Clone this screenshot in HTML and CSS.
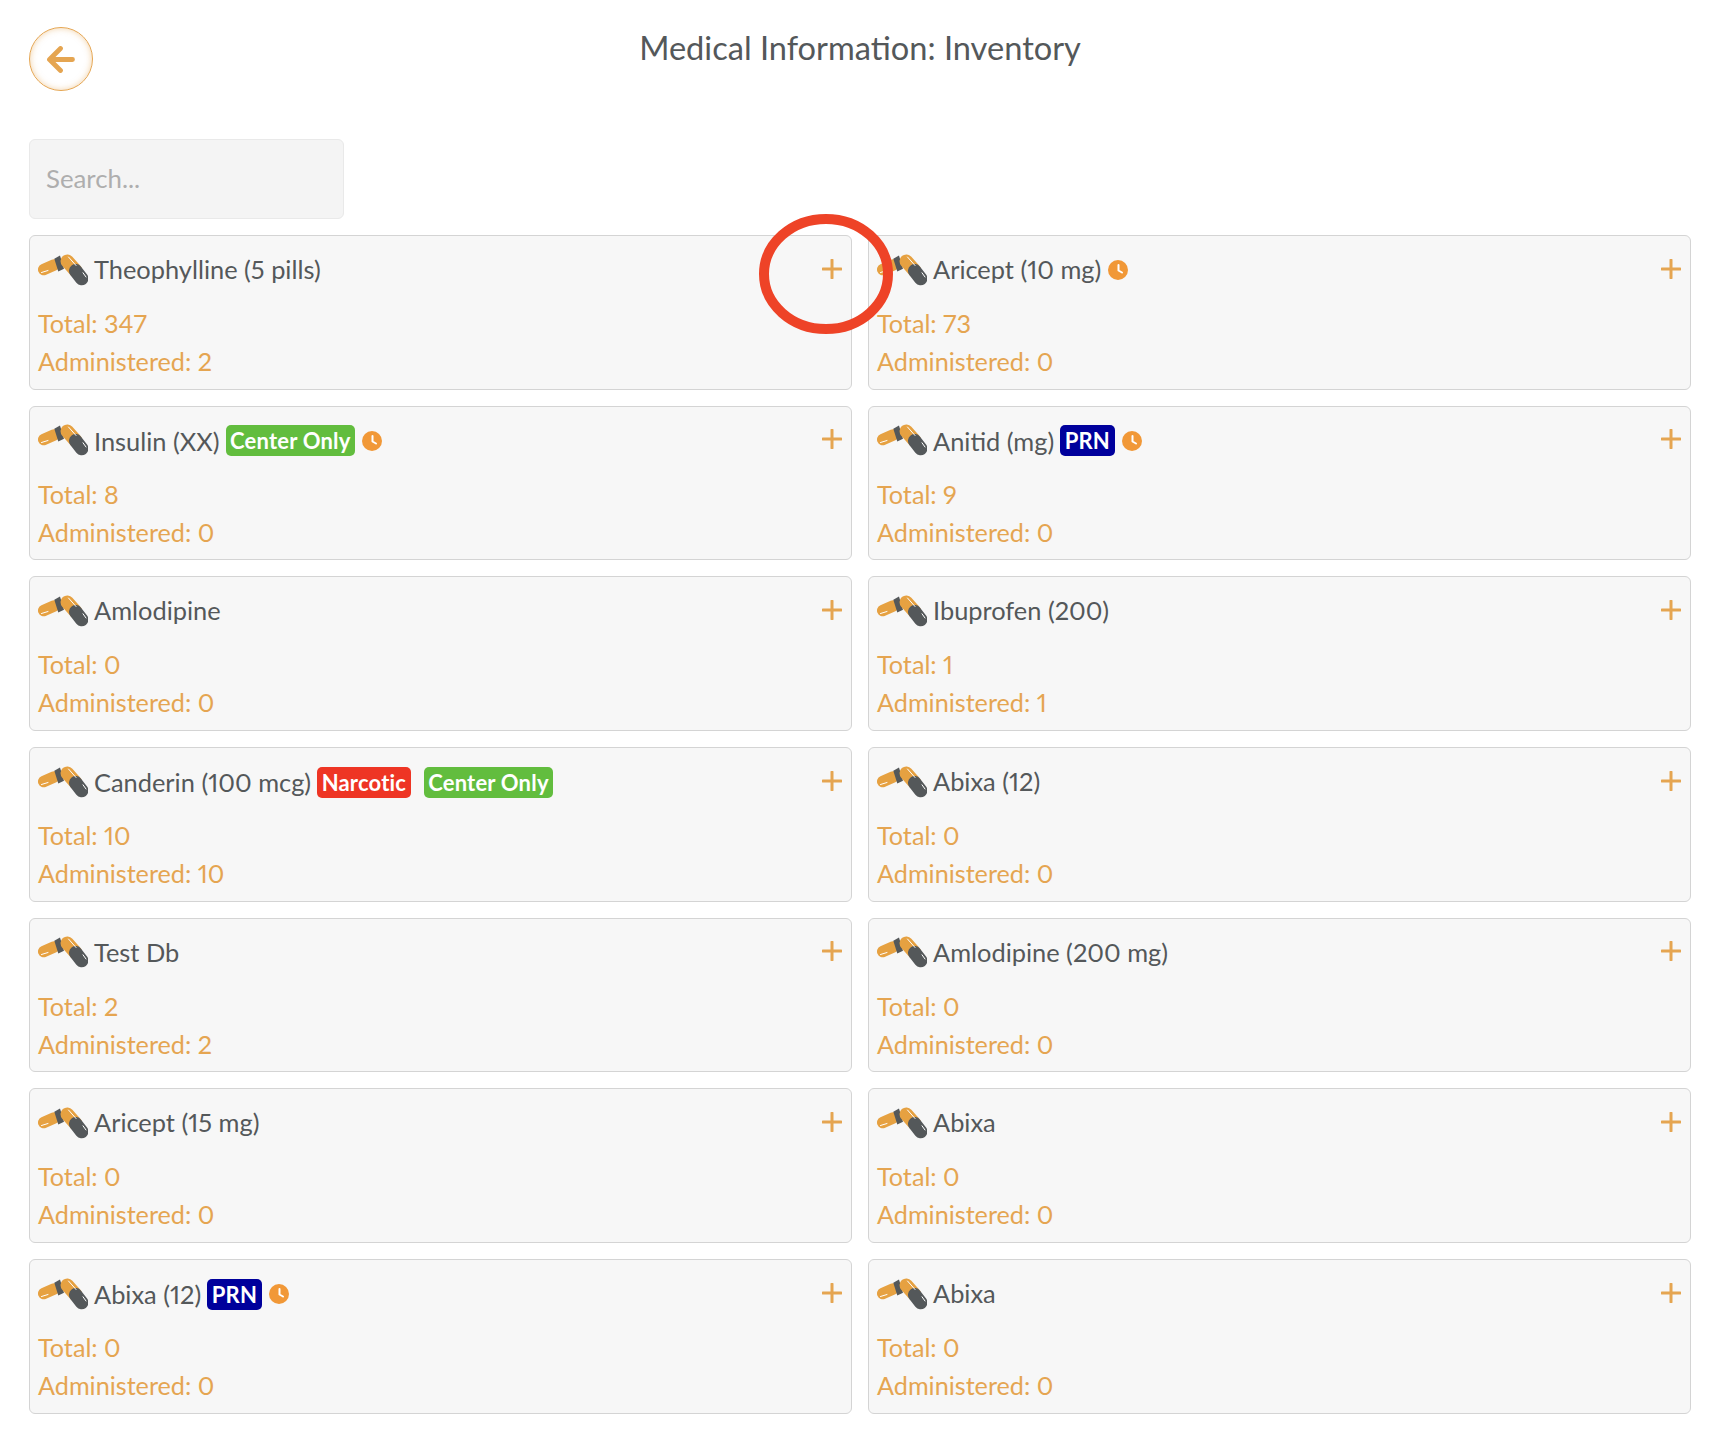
FILE: index.html
```html
<!DOCTYPE html>
<html lang="en">
<head>
<meta charset="utf-8">
<title>Medical Information: Inventory</title>
<link rel="stylesheet" href="styles.css">
</head>
<body>
<svg width="0" height="0" class="defs">
  <symbol id="pill" viewBox="0 0 50 32">
    <path d="M5.800 15.500 16 11" stroke="#e6a141" stroke-width="11.700" stroke-linecap="round" fill="none"/>
    <path d="M3.500 18.500 10 16.500" stroke="#fff" stroke-width="1" fill="none" stroke-linecap="round"/>
    <path d="M16.300 4.800 22 1.500 26 14.800 20.300 17.500Z" fill="#54585a"/>
    <path d="M29.300 7.200 37.700 16.800" stroke="#e6a141" stroke-width="13.500" stroke-linecap="round" fill="none"/>
    <path d="M37.700 16.800 43.700 24.600" stroke="#54585a" stroke-width="13.500" stroke-linecap="round" fill="none"/>
    <path d="M30.500 3 38 11.500M45 18.800 48 23" stroke="#fff" stroke-width="1" fill="none" stroke-linecap="round"/>
  </symbol>
  <symbol id="plus" viewBox="0 0 20 20">
    <path d="M10 1V19M1 10H19" stroke="#e5a551" stroke-width="3" stroke-linecap="round" fill="none"/>
  </symbol>
  <symbol id="clock" viewBox="0 0 20 20">
    <circle cx="10" cy="10" r="10" fill="#f19837"/>
    <path d="M10.500 5V10.500L14 12.500" stroke="#fff" stroke-width="2" stroke-linecap="round" stroke-linejoin="round" fill="none"/>
  </symbol>
</svg>

<header class="header">
  <a class="back" href="#" aria-label="Back">
    <svg class="back-icon" viewBox="0 0 28 27"><path d="M13.500 2.500 2.500 13.500 13.500 24.500M3 13.500H25.500" stroke="#e5a551" stroke-width="4.800" stroke-linecap="round" stroke-linejoin="round" fill="none"/></svg>
  </a>
  <h1 class="title">Medical Information: Inventory</h1>
</header>

<input class="search" type="text" placeholder="Search...">

<main class="grid">
  <article class="card">
    <div class="row"><svg class="pill"><use href="#pill"/></svg><span class="name">Theophylline (5 pills)</span><button class="add"><svg class="plus"><use href="#plus"/></svg></button></div>
    <p class="stat">Total: 347</p><p class="stat">Administered: 2</p>
  </article>
  <article class="card">
    <div class="row"><svg class="pill"><use href="#pill"/></svg><span class="name">Aricept (10 mg)</span><svg class="clock"><use href="#clock"/></svg><button class="add"><svg class="plus"><use href="#plus"/></svg></button></div>
    <p class="stat">Total: 73</p><p class="stat">Administered: 0</p>
  </article>
  <article class="card">
    <div class="row"><svg class="pill"><use href="#pill"/></svg><span class="name">Insulin (XX)</span><span class="badge green">Center Only</span><svg class="clock"><use href="#clock"/></svg><button class="add"><svg class="plus"><use href="#plus"/></svg></button></div>
    <p class="stat">Total: 8</p><p class="stat">Administered: 0</p>
  </article>
  <article class="card">
    <div class="row"><svg class="pill"><use href="#pill"/></svg><span class="name">Anitid (mg)</span><span class="badge navy">PRN</span><svg class="clock"><use href="#clock"/></svg><button class="add"><svg class="plus"><use href="#plus"/></svg></button></div>
    <p class="stat">Total: 9</p><p class="stat">Administered: 0</p>
  </article>
  <article class="card">
    <div class="row"><svg class="pill"><use href="#pill"/></svg><span class="name">Amlodipine</span><button class="add"><svg class="plus"><use href="#plus"/></svg></button></div>
    <p class="stat">Total: 0</p><p class="stat">Administered: 0</p>
  </article>
  <article class="card">
    <div class="row"><svg class="pill"><use href="#pill"/></svg><span class="name">Ibuprofen (200)</span><button class="add"><svg class="plus"><use href="#plus"/></svg></button></div>
    <p class="stat">Total: 1</p><p class="stat">Administered: 1</p>
  </article>
  <article class="card">
    <div class="row"><svg class="pill"><use href="#pill"/></svg><span class="name">Canderin (100 mcg)</span><span class="badge red">Narcotic</span><span class="badge green spaced">Center Only</span><button class="add"><svg class="plus"><use href="#plus"/></svg></button></div>
    <p class="stat">Total: 10</p><p class="stat">Administered: 10</p>
  </article>
  <article class="card">
    <div class="row"><svg class="pill"><use href="#pill"/></svg><span class="name">Abixa (12)</span><button class="add"><svg class="plus"><use href="#plus"/></svg></button></div>
    <p class="stat">Total: 0</p><p class="stat">Administered: 0</p>
  </article>
  <article class="card">
    <div class="row"><svg class="pill"><use href="#pill"/></svg><span class="name">Test Db</span><button class="add"><svg class="plus"><use href="#plus"/></svg></button></div>
    <p class="stat">Total: 2</p><p class="stat">Administered: 2</p>
  </article>
  <article class="card">
    <div class="row"><svg class="pill"><use href="#pill"/></svg><span class="name">Amlodipine (200 mg)</span><button class="add"><svg class="plus"><use href="#plus"/></svg></button></div>
    <p class="stat">Total: 0</p><p class="stat">Administered: 0</p>
  </article>
  <article class="card">
    <div class="row"><svg class="pill"><use href="#pill"/></svg><span class="name">Aricept (15 mg)</span><button class="add"><svg class="plus"><use href="#plus"/></svg></button></div>
    <p class="stat">Total: 0</p><p class="stat">Administered: 0</p>
  </article>
  <article class="card">
    <div class="row"><svg class="pill"><use href="#pill"/></svg><span class="name">Abixa</span><button class="add"><svg class="plus"><use href="#plus"/></svg></button></div>
    <p class="stat">Total: 0</p><p class="stat">Administered: 0</p>
  </article>
  <article class="card">
    <div class="row"><svg class="pill"><use href="#pill"/></svg><span class="name">Abixa (12)</span><span class="badge navy">PRN</span><svg class="clock"><use href="#clock"/></svg><button class="add"><svg class="plus"><use href="#plus"/></svg></button></div>
    <p class="stat">Total: 0</p><p class="stat">Administered: 0</p>
  </article>
  <article class="card">
    <div class="row"><svg class="pill"><use href="#pill"/></svg><span class="name">Abixa</span><button class="add"><svg class="plus"><use href="#plus"/></svg></button></div>
    <p class="stat">Total: 0</p><p class="stat">Administered: 0</p>
  </article>
</main>

<svg class="annotation" viewBox="0 0 140 126" aria-hidden="true"><ellipse cx="70" cy="63" rx="62" ry="55" stroke="#ee4327" stroke-width="10" fill="none"/></svg>
</body>
</html>
```

FILE: styles.css
```css
html, body {
  margin: 0;
  background: #fff;
}

body {
  position: relative;
  padding: 0 33px 24px 29px;
  font-family: "Lato", "Open Sans", sans-serif;
  font-size: 25.400px;
  font-variant-numeric: proportional-nums;
  color: #54585a;
}

.defs {
  position: absolute;
}

.header {
  display: grid;
  grid-template-columns: 64px 1fr 64px;
  height: 139px;
}

.back {
  display: flex;
  align-items: center;
  justify-content: center;
  box-sizing: border-box;
  width: 64px;
  height: 64px;
  margin-top: 27px;
  border: 1px solid #e5a551;
  border-radius: 50%;
  box-shadow: inset 0 0 6px rgba(229, 165, 81, 0.5);
}

.back-icon {
  width: 28px;
  height: 27px;
}

.title {
  margin: 28px 0 0;
  font-size: 32.600px;
  font-weight: 400;
  line-height: 40px;
  text-align: center;
}

.search {
  display: block;
  box-sizing: border-box;
  width: 315px;
  height: 80px;
  margin: 0 0 16px;
  padding: 0 16px 3px;
  border: 1px solid #e9e9e9;
  border-radius: 6px;
  background: #f4f4f4;
  font: inherit;
  font-size: 25.800px;
}

.search::placeholder {
  color: #aeaeae;
}

.grid {
  display: grid;
  grid-template-columns: 1fr 1fr;
  grid-auto-rows: 154.700px;
  gap: 16px;
}

.card {
  box-sizing: border-box;
  padding: 8px;
  border: 1px solid #d4d4d4;
  border-radius: 6px;
  background: #f7f7f7;
}

.row {
  display: flex;
  align-items: center;
  height: 52px;
  margin-bottom: 8px;
}

.pill {
  flex: none;
  width: 50px;
  height: 32px;
  margin: -1px 6px 0 0;
}

.name {
  margin-bottom: 2px;
  white-space: nowrap;
}

.name:has(+ .badge) {
  margin-bottom: 0;
}

.badge {
  margin-left: 6px;
  padding: 0 4.500px;
  border-radius: 5px;
  color: #fff;
  font-weight: 700;
  font-size: 22px;
  letter-spacing: 0.2px;
  line-height: 31px;
  white-space: nowrap;
}

.spaced {
  margin-left: 13px;
}

.green {
  background: #62bd3e;
}

.red {
  background: #ee3524;
}

.navy {
  background: #00009c;
}

.clock {
  flex: none;
  width: 20px;
  height: 20px;
  margin-left: 7px;
}

.add {
  display: flex;
  flex: none;
  margin: -3px 1px 0 auto;
  padding: 0;
  border: 0;
  background: none;
}

.plus {
  width: 20px;
  height: 20px;
}

.stat {
  margin: 0;
  color: #e5a551;
  font-size: 25.200px;
  line-height: 38px;
}

.annotation {
  position: absolute;
  left: 756px;
  top: 211px;
  width: 140px;
  height: 126px;
}
```
